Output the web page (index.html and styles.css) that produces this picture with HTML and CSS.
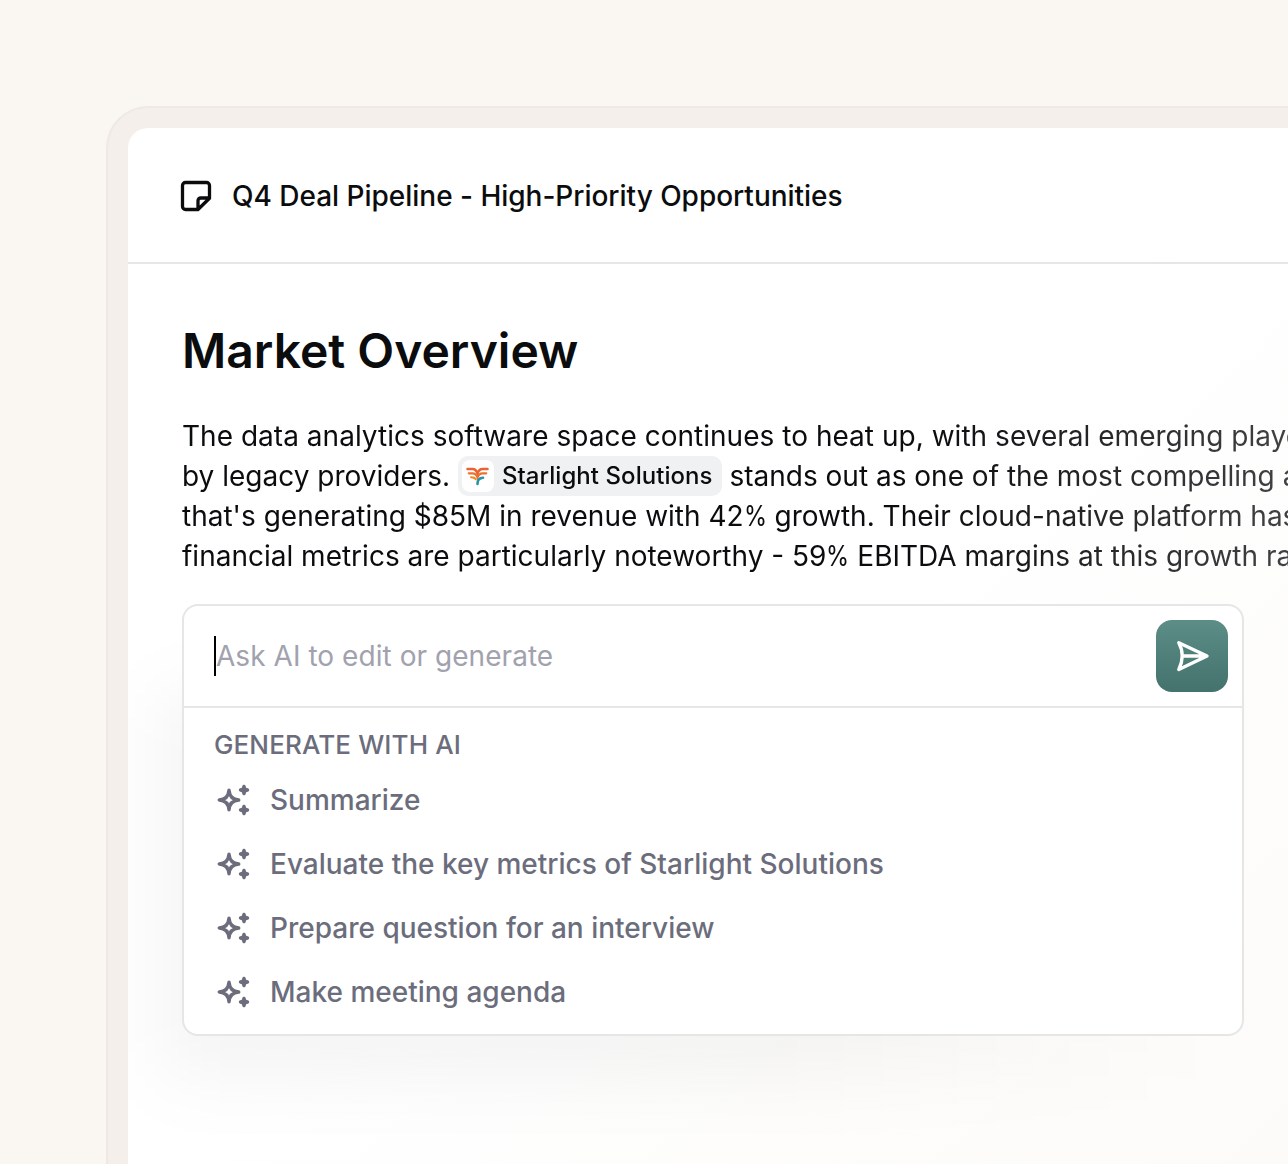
FILE: index.html
```html
<!DOCTYPE html>
<html lang="en">

<head>
    <meta charset="UTF-8">
    <meta name="viewport" content="width=device-width, initial-scale=1.0">
    <title>Q4 Deal Pipeline</title>
    <link rel="stylesheet" href="styles.css">
</head>

<body>
    <!-- Shared sparkle icon -->
    <svg class="sprite" aria-hidden="true">
        <symbol id="sparkles" viewBox="0 0 36 36">
            <path d="M13 8.300C13.500 14.300 16.700 17.500 22.700 18C16.700 18.500 13.500 21.700 13 27.700C12.500 21.700 9.300 18.500 3.300 18C9.300 17.500 12.500 14.300 13 8.300Z" fill="none" stroke="currentColor" stroke-width="3.500" stroke-linejoin="round" />
            <path id="spark" d="M28 4.500C28.600 7.100 28.900 7.400 31.500 8C28.900 8.600 28.600 8.900 28 11.500C27.400 8.900 27.100 8.600 24.500 8C27.100 7.400 27.400 7.100 28 4.500Z" fill="currentColor" stroke="currentColor" stroke-width="3.400" stroke-linejoin="round" />
            <use href="#spark" y="20" />
        </symbol>
    </svg>

    <div class="frame">
        <div class="window">
            <header class="doc-header">
                <svg class="note-icon" viewBox="0 0 32 32" fill="none" stroke="currentColor" stroke-width="3.300" stroke-linejoin="round">
                    <path d="M18 29.500H5.500a3 3 0 0 1-3-3V5.500a3 3 0 0 1 3-3h21a3 3 0 0 1 3 3V18.300L18 29.500V20.700a2.700 2.700 0 0 1 2.700-2.700h8.800" />
                </svg>
                <span>Q4 Deal Pipeline - High-Priority Opportunities</span>
            </header>

            <main class="doc">
                <h1>Market Overview</h1>
                <p class="text">
                    <span class="loose">The data analytics software space continues to heat up, with several emerging players</span><br>
                    by legacy providers.
                    <span class="chip"><span class="chip-logo"><svg viewBox="0 0 24 24" fill="none" stroke-linecap="round">
                        <path d="M1.500 5H6.500C9 5 10.500 6.500 11.500 9.500C12.500 6.500 14 5 16.500 5H21.500" stroke="#ea6330" stroke-width="2.500" />
                        <path d="M2.800 9.300H6.500C9 9.300 10.500 10.800 11.500 13.300C12.500 10.800 14 9.300 16.500 9.300H20.200" stroke="#ee7030" stroke-width="2.300" />
                        <path d="M5 13.300C7.500 13.300 9 14 9.800 15.300" stroke="#f08a28" stroke-width="2" />
                        <path d="M17 13.800C13 14 11.500 16 11.500 20" stroke="#2c93a5" stroke-width="2.600" />
                    </svg></span>Starlight Solutions</span>
                    stands out as one of the most compelling assets<br>
                    that's generating $85M in revenue with 42<span class="pct">%</span> growth. Their cloud-native platform has<br>
                    financial metrics are particularly noteworthy - 59<span class="pct">%</span> EBITDA margins at this growth rate
                </p>

                <div class="ai-wrap">
                    <div class="ai-box">
                        <div class="prompt">
                            <span class="caret"></span>
                            <span class="placeholder">Ask AI to edit or generate</span>
                            <button class="send" aria-label="Send">
                                <svg viewBox="0 0 36 36" fill="none" stroke="currentColor" stroke-width="3.400" stroke-linejoin="round" stroke-linecap="round">
                                    <path d="M4.800 4.800L33 18L4.800 31.500C7.200 26.800 8.200 22.500 8.200 18C8.200 13.500 7.200 9.200 4.800 4.800ZM8.200 18H31" />
                                </svg>
                            </button>
                        </div>
                        <div class="label">GENERATE WITH AI</div>
                        <ul class="actions">
                            <li><svg><use href="#sparkles" /></svg>Summarize</li>
                            <li><svg><use href="#sparkles" /></svg>Evaluate the key metrics of Starlight Solutions</li>
                            <li><svg><use href="#sparkles" /></svg>Prepare question for an interview</li>
                            <li><svg><use href="#sparkles" /></svg>Make meeting agenda</li>
                        </ul>
                    </div>
                </div>
            </main>
        </div>
    </div>
</body>

</html>
```

FILE: styles.css
```css
* {
    box-sizing: border-box;
}

body {
    margin: 0;
    height: 1164px;
    padding: 106px 0 0 106px;
    overflow: hidden;
    background: #faf6f2;
    color: #0b0c0e;
    font-family: Inter, "Liberation Sans", sans-serif;
    font-size: 28px;
    line-height: 40px;
}

.sprite {
    position: absolute;
    width: 0;
    height: 0;
}

.frame {
    height: 1058px;
    padding: 20px 0 0 20px;
    border: 2px solid #eee9e3;
    border-width: 2px 0 0 2px;
    border-radius: 42px 0 0 0;
    background: #f4efea;
}

.window {
    height: 100%;
    border-radius: 20px 0 0 0;
    overflow: hidden;
    background: linear-gradient(to bottom right, #fff 50%, #fcfbf9);
}

/* Document title bar */
.doc-header {
    display: flex;
    align-items: center;
    gap: 20px;
    height: 136px;
    padding: 2px 0 0 52px;
    border-bottom: 2px solid #e6e6e6;
    font-weight: 500;
    letter-spacing: -.02px;
}

.note-icon {
    width: 32px;
    height: 32px;
}

.doc {
    padding: 55px 0 0 54px;
}

h1 {
    margin: 0;
    font-size: 48px;
    line-height: 64px;
    font-weight: 600;
}

.text {
    margin: 33px 0 28px;
    white-space: nowrap;
    -webkit-mask-image: linear-gradient(to right, #000 740px, rgba(0, 0, 0, .78) 1106px);
    mask-image: linear-gradient(to right, #000 740px, rgba(0, 0, 0, .78) 1106px);
}

.loose {
    letter-spacing: .025px;
}

/* slightly condensed percent sign */
.pct {
    display: inline-block;
    margin-right: -4.5px;
    transform: scaleX(.84);
    transform-origin: left;
}

.chip {
    display: inline-flex;
    align-items: center;
    gap: 8px;
    height: 40px;
    padding: 0 9px 0 4px;
    border-radius: 10px;
    background: #f0f1f2;
    font-size: 24px;
    font-weight: 500;
    letter-spacing: .05px;
    vertical-align: top;
}

.chip-logo {
    display: flex;
    width: 32px;
    height: 32px;
    padding: 4px;
    border-radius: 8px;
    background: #fff;
}

/* AI prompt popover */
.ai-wrap {
    position: relative;
    width: 1062px;
}

.ai-wrap::before {
    content: "";
    position: absolute;
    inset: 90px 40px -40px -20px;
    background: linear-gradient(to right, rgba(0, 0, 0, .045) 60%, transparent);
    filter: blur(36px);
}

.ai-box {
    position: relative;
    height: 432px;
    border: 2px solid #e6e6e6;
    border-radius: 16px;
    background: #fff;
    color: #6b6d7c;
}

.prompt {
    display: flex;
    align-items: center;
    height: 102px;
    padding: 0 14px 0 30px;
    border-bottom: 2px solid #e6e6e6;
}

.caret {
    width: 2px;
    height: 40px;
    background: #000;
}

.placeholder {
    color: #a1a2ae;
    letter-spacing: .05px;
}

.send {
    display: flex;
    align-items: center;
    justify-content: center;
    width: 72px;
    height: 72px;
    margin-left: auto;
    padding: 0;
    border: 0;
    border-radius: 16px;
    background: linear-gradient(#5c8d87, #44726d);
    color: #fff;
}

.send svg {
    width: 36px;
    height: 36px;
}

.label {
    padding: 21px 30px 0;
    font-size: 26px;
    line-height: 32px;
    font-weight: 500;
    letter-spacing: .12px;
}

.actions {
    margin: 7px 0 0;
    padding: 0 30px;
    list-style: none;
    font-weight: 500;
}

.actions li {
    display: flex;
    align-items: center;
    gap: 18px;
    height: 64px;
}

.actions svg {
    width: 36px;
    height: 36px;
    margin-left: 2px;
}
```
